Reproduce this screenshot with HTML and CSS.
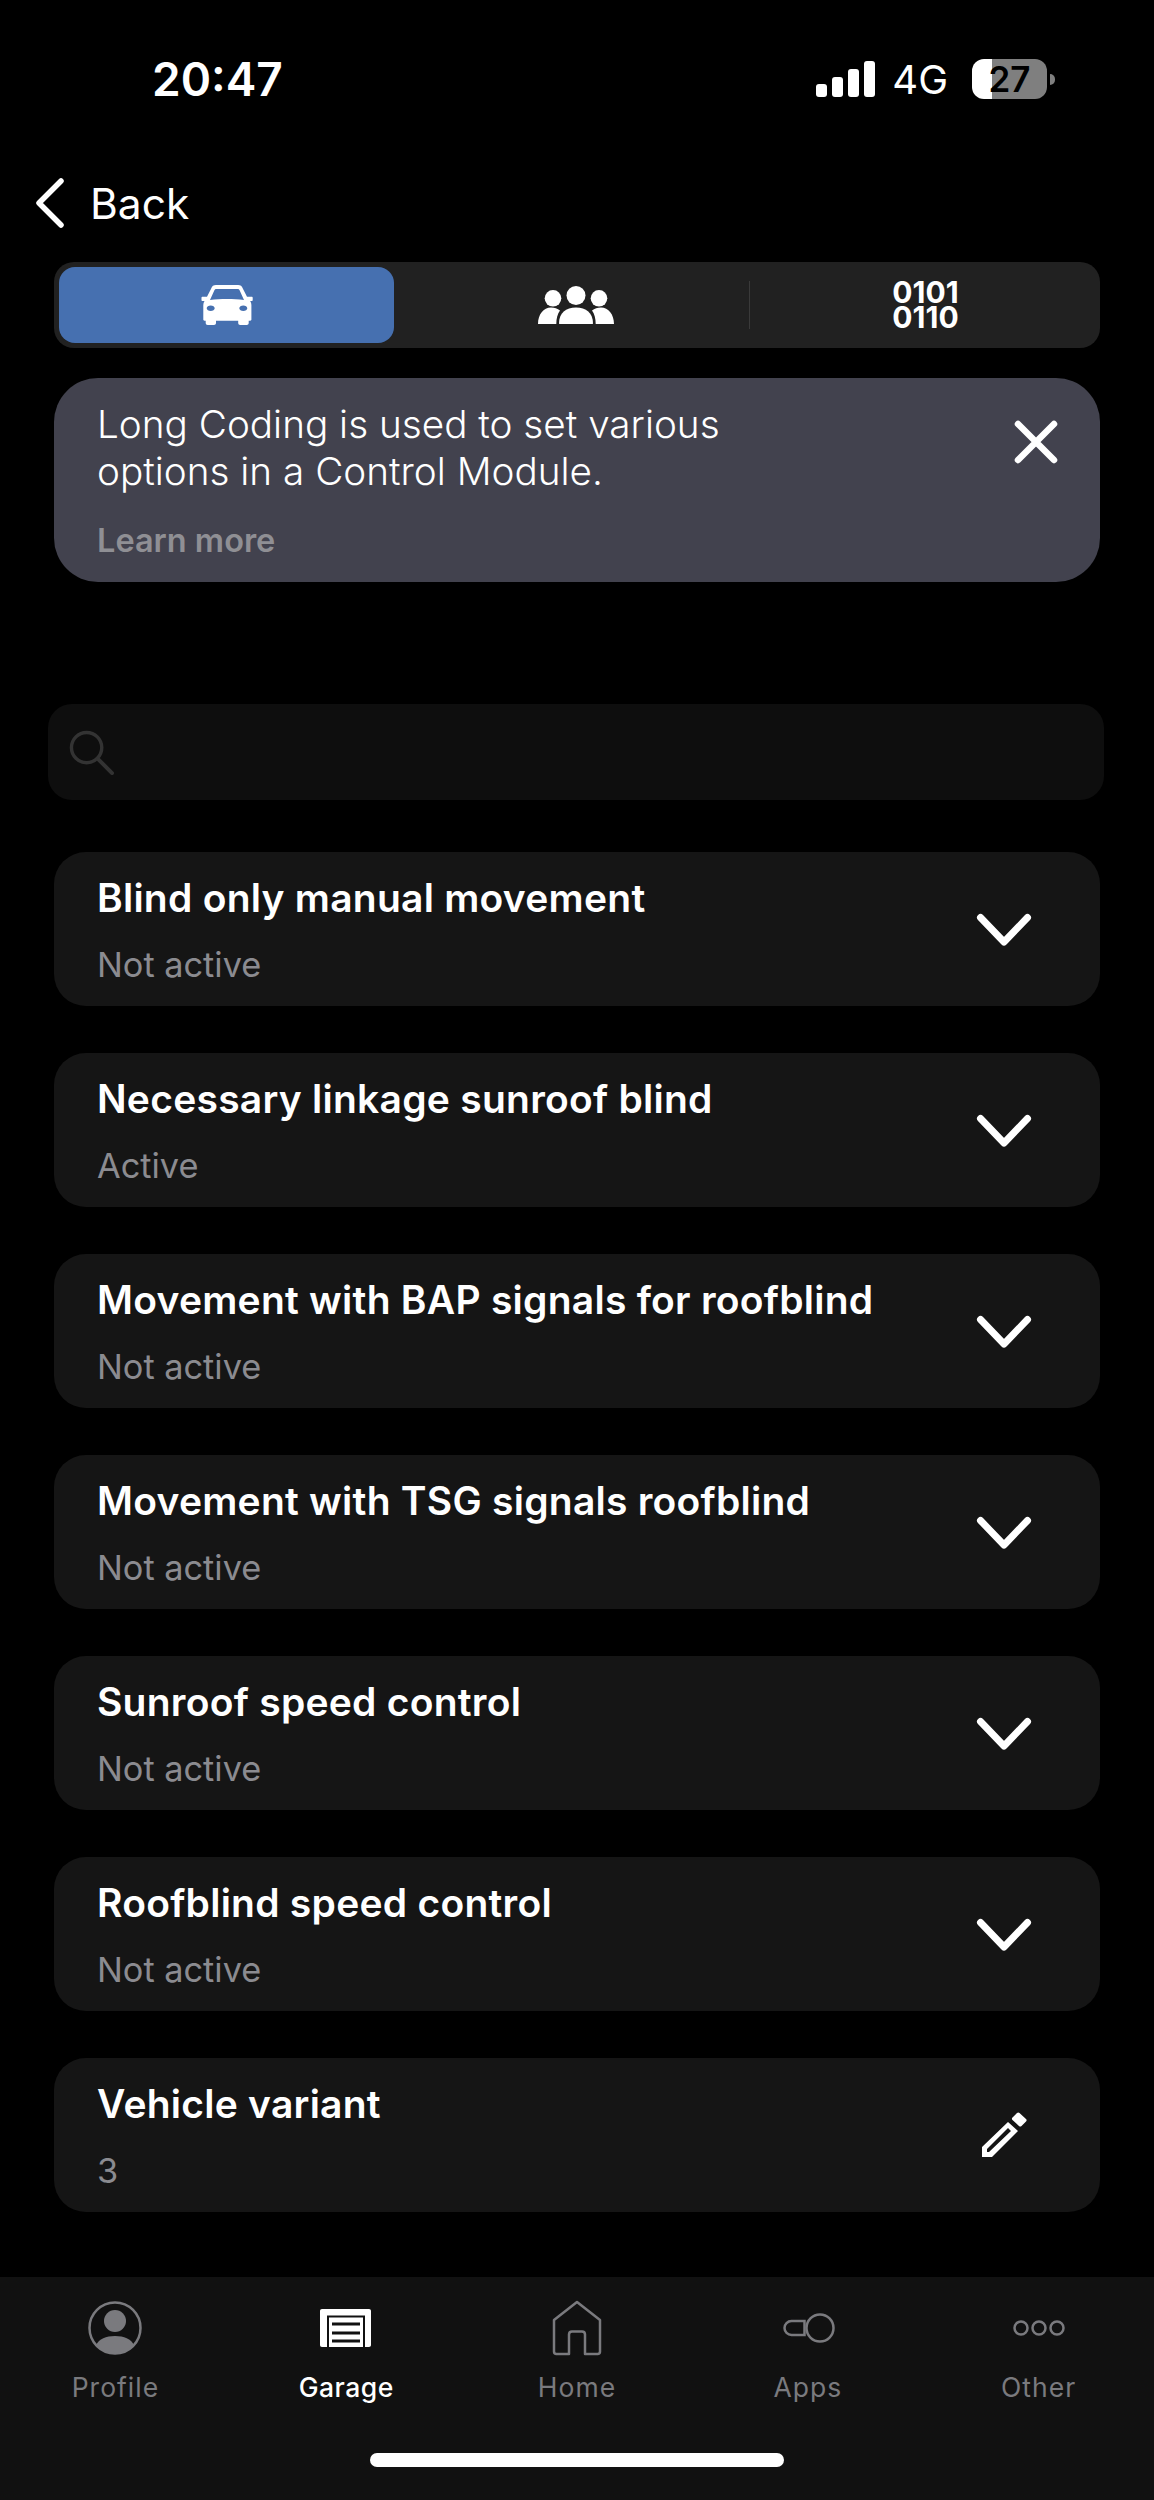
FILE: index.html
```html
<!DOCTYPE html>
<html lang="en">
<head>
  <meta charset="UTF-8">
  <meta name="viewport" content="width=device-width, initial-scale=1.0">
  <title>Long Coding</title>
  <link rel="stylesheet" href="styles.css">
</head>
<body>
<div class="page">
  <div class="status-bar">
    <span class="time">20:47</span>
    <div class="status-right">
      <div class="signal">
        <span class="bar bar-1"></span>
        <span class="bar bar-2"></span>
        <span class="bar bar-3"></span>
        <span class="bar bar-4"></span>
      </div>
      <span class="network">4G</span>
      <div class="battery"><span class="battery-level">27</span></div>
      <span class="battery-nub"></span>
    </div>
  </div>

  <div class="back-row">
    <svg class="back-icon" width="31" height="50" viewBox="0 0 31 50"><path d="M27 3 5 25l22 22" fill="none" stroke="#fff" stroke-width="5.5" stroke-linecap="round" stroke-linejoin="round"/></svg>
    <span>Back</span>
  </div>

  <div class="segments">
    <div class="segment segment-active">
      <svg width="52" height="40" viewBox="0 0 52 40"><path fill="#fff" fill-rule="evenodd" d="M15 0h22c2.500 0 4 1 4.800 3.500L46 11.700h4.500c.8 0 1.200.4 1.200 1V15c0 .6-.4 1-1 1h-1.500c.8 1.200 1.200 2.500 1.200 4v14.500c0 .7-.5 1.200-1.200 1.200h-1.500V38c0 1.200-.8 2-2 2h-6.500c-1.200 0-2-.8-2-2v-2.300H15V38c0 1.200-.8 2-2 2H6.700c-1.200 0-2-.8-2-2v-2.300H3.500c-.7 0-1.200-.5-1.200-1.200V20c0-1.500.4-2.800 1.200-4H1.500c-.6 0-1-.4-1-1v-2.300c0-.6.4-1 1.200-1H6l4.200-8.200C11 1 12.500 0 15 0Zm.500 4c-1 0-1.700.4-2.100 1.300L9 15c5.500-.6 11-.9 17-.9s11.500.3 17 .9L38.600 5.300C38.200 4.400 37.500 4 36.500 4h-21ZM9.700 20.600c-2.200 0-4 1.200-4 2.700s1.800 2.700 4 2.700 4-1.200 4-2.700-1.800-2.700-4-2.700Zm32.600 0c-2.200 0-4 1.200-4 2.700s1.800 2.700 4 2.700 4-1.200 4-2.700-1.800-2.700-4-2.700Z"/></svg>
    </div>
    <div class="segment segment-people">
      <svg width="76" height="38" viewBox="0 0 76 38"><g fill="#fff"><circle cx="38" cy="9.500" r="9.500"/><circle cx="15" cy="12.300" r="8.300"/><circle cx="61" cy="12.300" r="8.300"/><path d="M21 37.500c0-10.500 7-16 17-16s17 5.500 17 16c0 .3-.2.5-.5.5h-33c-.3 0-.5-.2-.5-.5Z"/><path d="M0 38c0-9.500 5.500-16.500 13-16.500 3.500 0 6.500 1 9 3-2.500 3.500-3.700 8-3.700 13.500H0Z"/><path d="M76 38c0-9.500-5.500-16.500-13-16.500-3.500 0-6.500 1-9 3 2.500 3.500 3.700 8 3.700 13.500H76Z"/></g></svg>
    </div>
    <div class="segment segment-binary">
      <div class="binary">0101 0110</div>
    </div>
  </div>

  <div class="notice">
    <div class="notice-text">
      <p class="notice-body">Long Coding is used to set various options in a Control Module.</p>
      <p class="notice-link">Learn more</p>
    </div>
    <svg class="notice-close" width="44" height="44" viewBox="0 0 44 44"><path d="M4 4l36 36M40 4 4 40" stroke="#fff" stroke-width="6.500" stroke-linecap="round"/></svg>
  </div>

  <div class="search">
    <svg width="45" height="45" viewBox="0 0 46 46"><circle cx="18" cy="18" r="15.500" fill="none" stroke="#333" stroke-width="3.500"/><path d="m30 30 14 14" stroke="#333" stroke-width="4" stroke-linecap="round"/></svg>
  </div>

  <div class="list">
    <div class="card">
      <div><div class="card-title">Blind only manual movement</div><div class="card-value">Not active</div></div>
      <svg class="chevron" width="58" height="34" viewBox="0 0 58 34"><path d="M5.500 5.500 29 30 52.500 5.500" fill="none" stroke="#fff" stroke-width="7" stroke-linecap="round" stroke-linejoin="round"/></svg>
    </div>
    <div class="card">
      <div><div class="card-title">Necessary linkage sunroof blind</div><div class="card-value">Active</div></div>
      <svg class="chevron" width="58" height="34" viewBox="0 0 58 34"><path d="M5.500 5.500 29 30 52.500 5.500" fill="none" stroke="#fff" stroke-width="7" stroke-linecap="round" stroke-linejoin="round"/></svg>
    </div>
    <div class="card">
      <div><div class="card-title">Movement with BAP signals for roofblind</div><div class="card-value">Not active</div></div>
      <svg class="chevron" width="58" height="34" viewBox="0 0 58 34"><path d="M5.500 5.500 29 30 52.500 5.500" fill="none" stroke="#fff" stroke-width="7" stroke-linecap="round" stroke-linejoin="round"/></svg>
    </div>
    <div class="card">
      <div><div class="card-title">Movement with TSG signals roofblind</div><div class="card-value">Not active</div></div>
      <svg class="chevron" width="58" height="34" viewBox="0 0 58 34"><path d="M5.500 5.500 29 30 52.500 5.500" fill="none" stroke="#fff" stroke-width="7" stroke-linecap="round" stroke-linejoin="round"/></svg>
    </div>
    <div class="card">
      <div><div class="card-title">Sunroof speed control</div><div class="card-value">Not active</div></div>
      <svg class="chevron" width="58" height="34" viewBox="0 0 58 34"><path d="M5.500 5.500 29 30 52.500 5.500" fill="none" stroke="#fff" stroke-width="7" stroke-linecap="round" stroke-linejoin="round"/></svg>
    </div>
    <div class="card">
      <div><div class="card-title">Roofblind speed control</div><div class="card-value">Not active</div></div>
      <svg class="chevron" width="58" height="34" viewBox="0 0 58 34"><path d="M5.500 5.500 29 30 52.500 5.500" fill="none" stroke="#fff" stroke-width="7" stroke-linecap="round" stroke-linejoin="round"/></svg>
    </div>
    <div class="card">
      <div><div class="card-title">Vehicle variant</div><div class="card-value">3</div></div>
      <svg class="pencil" width="48" height="48" viewBox="0 0 48 48"><g fill="#fff"><path fill-rule="evenodd" d="M2 36 28 11l10 9-26 26H2V36Zm5 2v3l2 0 22-21-3-3L7 38Z"/><path d="M32.500 6.500 37 2c.8-.8 1.700-.8 2.500 0l6.500 6c.8.8.8 1.700 0 2.500L41.500 15c-.8.8-1.700.8-2.500 0l-6.500-6c-.8-.8-.8-1.700 0-2.500Z"/></g></svg>
    </div>
  </div>

  <div class="tabbar">
    <div class="tabs">
      <div class="tab">
        <svg width="54" height="56" viewBox="0 0 54 56"><circle cx="27" cy="28" r="25.500" fill="none" stroke="#7a7a7e" stroke-width="2.500"/><circle cx="27" cy="21" r="11" fill="#7a7a7e"/><path d="M8 45c3-6 10-9 19-9s16 3 19 9c-4.500 5.500-11.500 9-19 9S12.500 50.500 8 45Z" fill="#7a7a7e"/></svg>
        <span class="tab-label">Profile</span>
      </div>
      <div class="tab tab-active">
        <svg width="54" height="56" viewBox="0 0 54 56"><path fill="#fff" d="M3 9h47c1.200 0 2 .8 2 2v34c0 1.200-.8 2-2 2h-4V15.500H8V47H3c-1.200 0-2-.8-2-2V11c0-1.200.8-2 2-2Z"/><path fill="#fff" d="M10 17.500h34V47H10z"/><path d="M13 24h28M13 33h28M13 41h28" stroke="#111" stroke-width="3"/></svg>
        <span class="tab-label">Garage</span>
      </div>
      <div class="tab">
        <svg width="54" height="56" viewBox="0 0 54 56"><path d="M27 2 4 20v31.500c0 1.500.8 2.500 2.500 2.500H19V34.500c0-2 1-3 3-3h10c2 0 3 1 3 3V54h12.500c1.700 0 2.500-1 2.500-2.500V20L27 2Z" fill="none" stroke="#7a7a7e" stroke-width="2.500" stroke-linejoin="round"/></svg>
        <span class="tab-label">Home</span>
      </div>
      <div class="tab">
        <svg width="54" height="56" viewBox="0 0 54 56"><circle cx="39" cy="28" r="13.500" fill="none" stroke="#7a7a7e" stroke-width="2.500"/><path d="M23.500 21H10.500a7 7 0 0 0 0 14h13z" fill="none" stroke="#7a7a7e" stroke-width="2.500"/></svg>
        <span class="tab-label">Apps</span>
      </div>
      <div class="tab">
        <svg width="54" height="56" viewBox="0 0 54 56"><g fill="none" stroke="#7a7a7e" stroke-width="2.500"><circle cx="9" cy="28" r="6.500"/><circle cx="27" cy="28" r="6.500"/><circle cx="45" cy="28" r="6.500"/></g></svg>
        <span class="tab-label">Other</span>
      </div>
    </div>
    <div class="home-indicator"></div>
  </div>
</div>
</body>
</html>
```

FILE: styles.css
```css
* {
  box-sizing: border-box;
}
body {
  margin: 0;
  background-color: #000;
  color: #fff;
  font-family: Inter, "Noto Sans", sans-serif;
}
p {
  margin: 0;
}
svg {
  display: block;
  flex-shrink: 0;
}
.page {
  width: 1154px;
  height: 2500px;
  display: flex;
  flex-direction: column;
}

/* status bar */
.status-bar {
  height: 102px;
  padding: 56px 99px 0 152px;
  display: flex;
  justify-content: space-between;
  align-items: center;
}
.time {
  font-size: 46px;
  font-weight: 600;
}
.status-right {
  display: flex;
  align-items: center;
}
.signal {
  display: flex;
  align-items: flex-end;
  gap: 5px;
  height: 36px;
  margin-right: 17px;
}
.bar {
  width: 11px;
  background-color: #fff;
  border-radius: 3px;
}
.bar-1 { height: 13px; }
.bar-2 { height: 20px; }
.bar-3 { height: 28px; }
.bar-4 { height: 36px; }
.network {
  font-size: 40px;
  margin-right: 24px;
}
.battery {
  width: 75px;
  height: 40px;
  border-radius: 12px;
  background: linear-gradient(to right, #fff 27%, #7f7f7f 27%);
  display: flex;
  align-items: center;
  justify-content: center;
}
.battery-level {
  color: #000;
  font-size: 35px;
  font-weight: 600;
}
.battery-nub {
  width: 5px;
  height: 11px;
  margin-left: 3px;
  background-color: #7f7f7f;
  border-radius: 0 5px 5px 0;
}

/* back link */
.back-row {
  height: 50px;
  margin-top: 76px;
  padding-left: 34px;
  display: flex;
  align-items: center;
  gap: 25px;
  font-size: 42.5px;
}

/* segmented control */
.segments {
  margin: 34px 54px 0;
  height: 86px;
  padding: 5px;
  background-color: #212121;
  border-radius: 20px;
  display: grid;
  grid-template-columns: 335px 355px 1fr;
}
.segment {
  display: flex;
  align-items: center;
  justify-content: center;
}
.segment-active {
  background-color: #4670b0;
  border-radius: 16px;
}
.segment-people {
  padding-left: 8px;
}
.segment-binary {
  position: relative;
  padding-left: 7px;
}
.segment-binary::before {
  content: "";
  position: absolute;
  left: 0;
  top: 14px;
  bottom: 14px;
  width: 1px;
  background-color: #3a3a3a;
}
.binary {
  width: min-content;
  font-size: 30px;
  font-weight: 700;
  line-height: 25px;
  text-align: center;
}

/* info box */
.notice {
  margin: 30px 54px 0;
  height: 204px;
  padding: 23px 42px 0 43px;
  background-color: #42424e;
  border-radius: 44px;
  display: flex;
  justify-content: space-between;
}
.notice-text {
  width: 680px;
}
.notice-body {
  font-size: 38.7px;
  line-height: 47px;
  font-weight: 300;
}
.notice-link {
  margin-top: 26px;
  font-size: 32.5px;
  font-weight: 600;
  color: #8f8f94;
}
.notice-close {
  margin-top: 19px;
}

/* search */
.search {
  margin: 122px 50px 0 48px;
  height: 96px;
  padding-left: 21px;
  background-color: #0e0e0e;
  border-radius: 24px;
  display: flex;
  align-items: center;
}

/* option list */
.list {
  margin: 52px 54px 0;
  display: flex;
  flex-direction: column;
  gap: 47px;
}
.card {
  height: 154px;
  padding: 0 67px 0 43px;
  background-color: #151515;
  border-radius: 32px;
  display: flex;
  justify-content: space-between;
  align-items: center;
}
.card-title {
  font-size: 39px;
  font-weight: 600;
  letter-spacing: 0.25px;
}
.card-value {
  margin-top: 23px;
  font-size: 34.3px;
  color: #8b8b90;
}
.pencil {
  margin-right: 5px;
}

/* bottom navigation */
.tabbar {
  margin-top: auto;
  height: 223px;
  background-color: #111;
  padding-top: 23px;
}
.tabs {
  display: grid;
  grid-template-columns: repeat(5, 1fr);
}
.tab {
  display: flex;
  flex-direction: column;
  align-items: center;
  gap: 15px;
  color: #7a7a7e;
}
.tab-active {
  color: #fff;
}
.tab-label {
  font-size: 26.5px;
  letter-spacing: 1px;
}
.tab-active .tab-label {
  font-weight: 500;
  letter-spacing: 0.5px;
}
.home-indicator {
  width: 414px;
  height: 14px;
  margin: 50px auto 0;
  background-color: #fff;
  border-radius: 7px;
}
```
